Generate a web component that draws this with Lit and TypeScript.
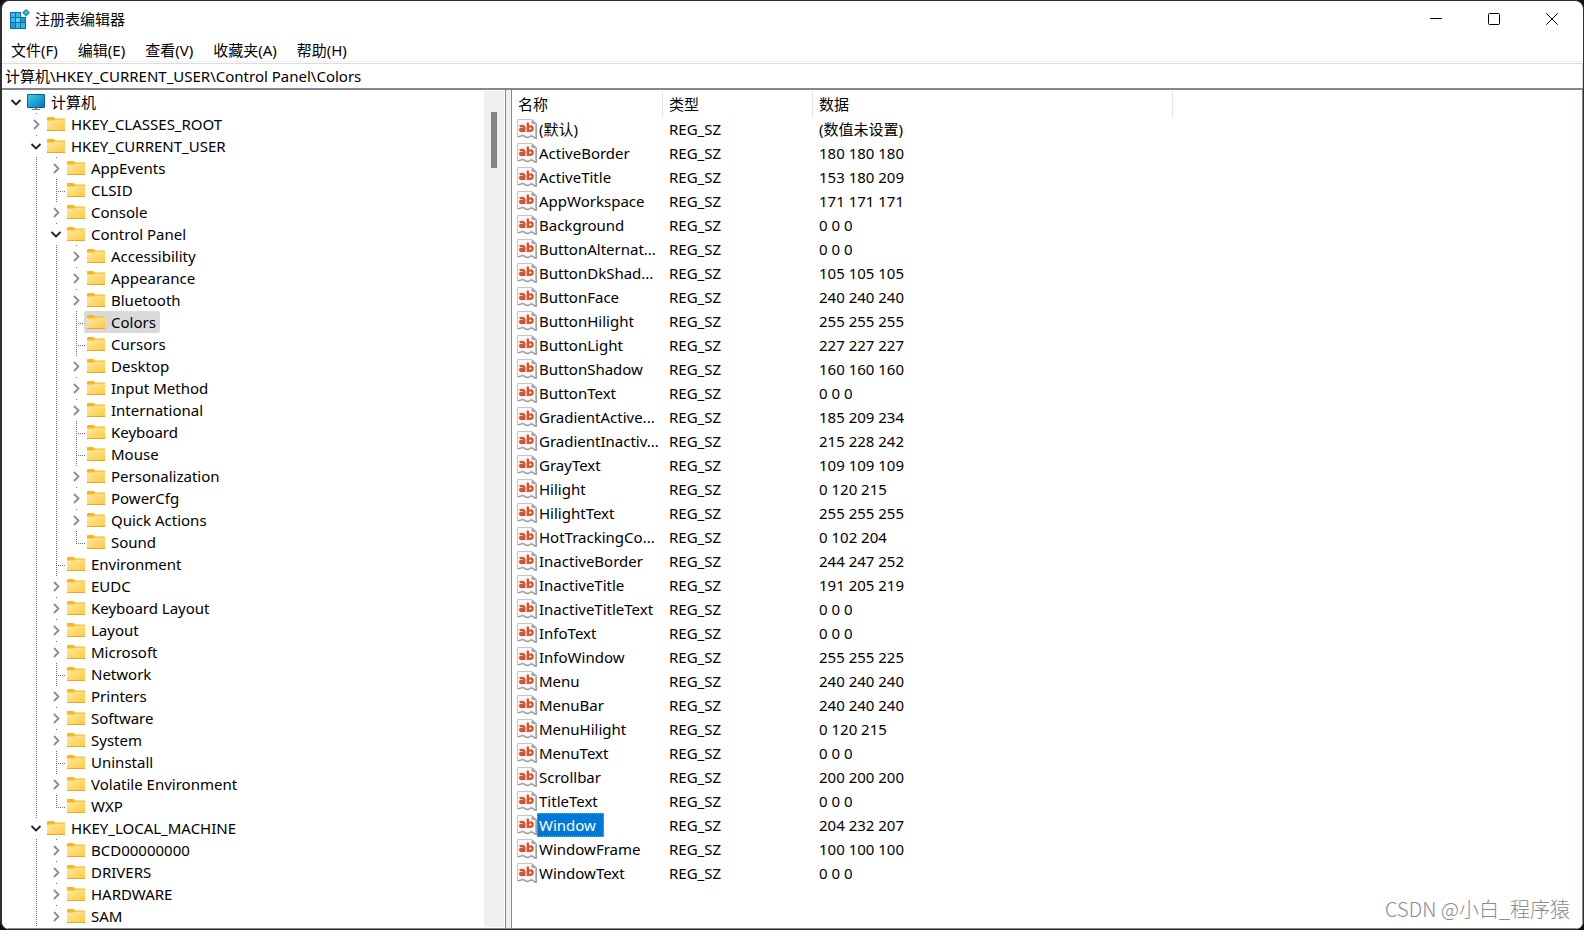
import { LitElement, html, css, svg, nothing } from "lit";
import { customElement, state } from "lit/decorators.js";
import { classMap } from "lit/directives/class-map.js";

type State = "open" | "closed" | "leaf";

interface Key {
  name: string;
  level: number;
  state: State;
}

const key = (level: number, state: State, ...names: string[]): Key[] =>
  names.map((name) => ({ name, level, state }));

const KEYS: Key[] = [
  ...key(0, "open", "计算机"),
  ...key(1, "closed", "HKEY_CLASSES_ROOT"),
  ...key(1, "open", "HKEY_CURRENT_USER"),
  ...key(2, "closed", "AppEvents"),
  ...key(2, "leaf", "CLSID"),
  ...key(2, "closed", "Console"),
  ...key(2, "open", "Control Panel"),
  ...key(3, "closed", "Accessibility", "Appearance", "Bluetooth"),
  ...key(3, "leaf", "Colors", "Cursors"),
  ...key(3, "closed", "Desktop", "Input Method", "International"),
  ...key(3, "leaf", "Keyboard", "Mouse"),
  ...key(3, "closed", "Personalization", "PowerCfg", "Quick Actions"),
  ...key(3, "leaf", "Sound"),
  ...key(2, "leaf", "Environment"),
  ...key(2, "closed", "EUDC", "Keyboard Layout", "Layout", "Microsoft"),
  ...key(2, "leaf", "Network"),
  ...key(2, "closed", "Printers", "Software", "System"),
  ...key(2, "leaf", "Uninstall"),
  ...key(2, "closed", "Volatile Environment"),
  ...key(2, "leaf", "WXP"),
  ...key(1, "open", "HKEY_LOCAL_MACHINE"),
  ...key(2, "closed", "BCD00000000", "DRIVERS", "HARDWARE", "SAM"),
];

const VALUES: [string, string][] = [
  ["(默认)", "(数值未设置)"],
  ["ActiveBorder", "180 180 180"],
  ["ActiveTitle", "153 180 209"],
  ["AppWorkspace", "171 171 171"],
  ["Background", "0 0 0"],
  ["ButtonAlternat...", "0 0 0"],
  ["ButtonDkShad...", "105 105 105"],
  ["ButtonFace", "240 240 240"],
  ["ButtonHilight", "255 255 255"],
  ["ButtonLight", "227 227 227"],
  ["ButtonShadow", "160 160 160"],
  ["ButtonText", "0 0 0"],
  ["GradientActive...", "185 209 234"],
  ["GradientInactiv...", "215 228 242"],
  ["GrayText", "109 109 109"],
  ["Hilight", "0 120 215"],
  ["HilightText", "255 255 255"],
  ["HotTrackingCo...", "0 102 204"],
  ["InactiveBorder", "244 247 252"],
  ["InactiveTitle", "191 205 219"],
  ["InactiveTitleText", "0 0 0"],
  ["InfoText", "0 0 0"],
  ["InfoWindow", "255 255 225"],
  ["Menu", "240 240 240"],
  ["MenuBar", "240 240 240"],
  ["MenuHilight", "0 120 215"],
  ["MenuText", "0 0 0"],
  ["Scrollbar", "200 200 200"],
  ["TitleText", "0 0 0"],
  ["Window", "204 232 207"],
  ["WindowFrame", "100 100 100"],
  ["WindowText", "0 0 0"],
];

const appIcon = html`<svg class="app-icon" viewBox="0 0 20 20" aria-hidden="true">
  <rect x="0" y="3" width="16" height="17" fill="#0b6fa8" />
  <g fill="#35b8ea">
    <rect x="1" y="4" width="4" height="4" /><rect x="6" y="4" width="4" height="4" />
    <rect x="1" y="9" width="4" height="4" /><rect x="6" y="9" width="4" height="4" fill="#62d0f5" />
    <rect x="11" y="9" width="4" height="4" fill="#1c9bd6" />
    <rect x="1" y="14" width="4" height="5" fill="#1c9bd6" /><rect x="6" y="14" width="4" height="5" />
    <rect x="11" y="14" width="4" height="5" />
  </g>
  <path d="M11 3h5v5h-5z" fill="#fff" />
  <path d="M16 0l4 3.800-4 3.800-4-3.800z" fill="#1f8fc4" />
  <path d="M16 2l2 1.800-2 1.800-2-1.800z" fill="#4fc0ea" />
</svg>`;

const computerIcon = html`<svg class="key-icon" viewBox="0 0 18 18" aria-hidden="true">
  <defs>
    <linearGradient id="screen" x1="0" y1="0" x2="1" y2="1">
      <stop offset="0" stop-color="#35d3e6" />
      <stop offset="1" stop-color="#0f6fc0" />
    </linearGradient>
  </defs>
  <rect x="0" y="1" width="18" height="14" rx="1" fill="#0c5f9c" />
  <rect x="1" y="2" width="16" height="12" fill="url(#screen)" />
  <path d="M8 15h2v1H8zM5 16h8v1H5z" fill="#6e7f8c" />
</svg>`;

const folderIcon = html`<svg class="key-icon" viewBox="0 0 18 18" aria-hidden="true">
  <defs>
    <linearGradient id="folder" x1="0" y1="0" x2="1" y2="1">
      <stop offset="0" stop-color="#ffe9a6" />
      <stop offset="1" stop-color="#ffcb3d" />
    </linearGradient>
  </defs>
  <path d="M0 3a1 1 0 0 1 1-1h5.500l1.500 1.500H17.500l.5.500V6H0z" fill="#f7b61c" />
  <path d="M0 5.500h6.500l1.500-1H18V15H0z" fill="url(#folder)" />
  <path d="M0 15h18v1H0z" fill="#e8a92a" />
</svg>`;

const stringIcon = html`<svg class="value-icon" viewBox="0 0 20 20" aria-hidden="true">
  <path
    d="M.5.5h14.500l4 4v15c-2-.2-3-2.500-4.500-2.500-2 0-2.500 2-4.500 1.500-2-.4-2.500-2-4.500-1.800-2 .2-2.500 1.300-5 .8z"
    fill="#f7f8f9"
    stroke="#c3c6c9"
  />
  <path d="M19.200 4.500v15c-2-.2-3-2.500-4.700-2.500-2 0-2.500 2-4.500 1.500-2-.4-2.500-2-4.500-1.800-2 .2-2.500 1.300-5 .8" fill="none" stroke="#94989c" stroke-width="1.300" />
  <path d="M15 .8v3.700h4z" fill="#a9adb1" stroke="#8d9195" stroke-width=".6" />
  <g fill="none" stroke="#d9532c" stroke-width="2.300">
    <path d="M2.600 7.300c2-.8 4.700-.8 4.700 1.300V13" />
    <path d="M7.200 9.700H5.200c-2.700 0-2.700 2.300-.5 2.300 1.400 0 2.300-.6 2.500-1.200" />
    <path d="M10.800 3.500V13" />
    <ellipse cx="13.200" cy="9.600" rx="2.400" ry="2.300" />
  </g>
</svg>`;

const twisty = (open: boolean) => svg`<svg class="twisty" viewBox="0 0 12 12" aria-hidden="true">
  ${
    open
      ? svg`<path d="M1.500 4l4.500 4.500L10.500 4" fill="none" stroke="#222" stroke-width="1.800" />`
      : svg`<path d="M4 2L8.500 6.500L4 11" fill="none" stroke="#8c8c8c" stroke-width="1.800" />`
  }
</svg>`;

@customElement("registry-tree")
export class RegistryTree extends LitElement {
  @state() private selected = "Colors";

  static styles = css`
    :host {
      display: flex;
      min-width: 0;
      background: #fff;
      border-right: 1px solid #828790;
    }
    .keys {
      flex: 1;
      min-width: 0;
      overflow: hidden;
      padding: 1px 0 0 4px;
    }
    .row {
      display: flex;
      height: 22px;
    }
    .guide {
      flex: none;
      width: 20px;
      display: flex;
      align-items: center;
      justify-content: center;
      background-repeat: no-repeat;
      --dot-v: repeating-linear-gradient(to bottom, #6e6e6e 0 1px, transparent 1px 2px);
      --dot-h: repeating-linear-gradient(to right, #6e6e6e 0 1px, transparent 1px 2px);
    }
    .line {
      background-image: var(--dot-v);
      background-position: 10px 0;
      background-size: 1px 22px;
    }
    .dot {
      background-image: var(--dot-v);
      background-position: 10px 0;
      background-size: 1px 1px;
    }
    .branch {
      background-image: var(--dot-v), var(--dot-h);
      background-position: 10px 0, 10px 12px;
      background-size: 1px 22px, 10px 1px;
    }
    .last {
      background-size: 1px 12px, 10px 1px;
    }
    .twisty {
      width: 12px;
      height: 12px;
    }
    .toggle {
      display: flex;
      padding: 0;
      border: 0;
      background: none;
    }
    .label {
      display: flex;
      align-items: center;
      gap: 4px;
      margin-left: -2px;
      padding: 0 4px 0 3px;
      border: 0;
      border-radius: 2px;
      background: none;
      color: #000;
      font: inherit;
      line-height: 22px;
      white-space: nowrap;
    }
    .text {
      padding-left: 2px;
    }
    .selected {
      background: #d9d9d9;
    }
    .key-icon {
      width: 18px;
      height: 18px;
    }
    .scrollbar {
      flex: none;
      width: 20px;
      margin: 1px 1px 1px 0;
      padding-top: 21px;
      background: #f0f0f0;
    }
    .thumb {
      width: 6px;
      height: 56px;
      margin: 0 auto;
      background: #858585;
    }
  `;

  private isLast(index: number) {
    const { level } = KEYS[index];
    const next = KEYS.slice(index + 1).find((k) => k.level <= level);
    return next !== undefined && next.level < level;
  }

  private row(item: Key, index: number) {
    const root = item.level === 0;
    const leaf = item.state === "leaf";
    const ancestors = Array.from({ length: item.level }, (_, i) => i);
    return html`<div
      class="row"
      role="treeitem"
      aria-level=${item.level + 1}
      aria-selected=${item.name === this.selected}
      aria-expanded=${leaf ? nothing : item.state === "open"}
    >
      ${ancestors.map((i) => html`<span class=${classMap({ guide: true, line: i > 0 })}></span>`)}
      <span
        class=${classMap({
          guide: true,
          dot: !leaf && !root,
          branch: leaf,
          last: leaf && this.isLast(index),
        })}
      >
        ${leaf
          ? nothing
          : html`<button class="toggle" aria-label=${item.name}>${twisty(item.state === "open")}</button>`}
      </span>
      <button
        class=${classMap({ label: true, selected: item.name === this.selected })}
        @click=${() => (this.selected = item.name)}
      >
        ${root ? computerIcon : folderIcon}<span class="text">${item.name}</span>
      </button>
    </div>`;
  }

  render() {
    return html`
      <div class="keys" role="tree">${KEYS.map((k, i) => this.row(k, i))}</div>
      <div class="scrollbar"><div class="thumb"></div></div>
    `;
  }
}

@customElement("registry-values")
export class RegistryValues extends LitElement {
  @state() private selected = "Window";

  static styles = css`
    :host {
      display: block;
      min-width: 0;
      padding: 1px 0 0 5px;
      background: #fff;
      border-left: 1px solid #828790;
      overflow: hidden;
    }
    table {
      width: 100%;
      table-layout: fixed;
      border-collapse: collapse;
    }
    .name {
      width: 146px;
    }
    .type {
      width: 150px;
    }
    .data {
      width: 360px;
    }
    th {
      height: 26px;
      box-sizing: border-box;
      padding: 0 0 0 6px;
      text-align: left;
      font-weight: 400;
      line-height: 26px;
      box-shadow: inset -1px 0 #e5e5e5;
    }
    th:first-child {
      padding-left: 1px;
    }
    th:last-child {
      box-shadow: none;
    }
    td {
      height: 24px;
      padding: 0 0 0 6px;
      line-height: 24px;
      white-space: nowrap;
    }
    td:first-child {
      padding: 0;
    }
    .cell {
      display: flex;
      align-items: center;
    }
    .value-icon {
      flex: none;
      width: 20px;
      height: 20px;
    }
    .value {
      box-sizing: border-box;
      height: 24px;
      padding: 0 1px;
      border: 1px solid transparent;
      background: none;
      color: #000;
      font: inherit;
      line-height: 22px;
      white-space: nowrap;
    }
    .selected {
      padding-right: 7px;
      border: 1px dotted #ff8728;
      background: #0078d7;
      color: #fff;
    }
  `;

  render() {
    return html`<table>
      <colgroup>
        <col class="name" />
        <col class="type" />
        <col class="data" />
        <col />
      </colgroup>
      <thead>
        <tr>
          <th scope="col">名称</th>
          <th scope="col">类型</th>
          <th scope="col">数据</th>
          <th></th>
        </tr>
      </thead>
      <tbody>
        ${VALUES.map(
          ([name, data]) => html`<tr>
            <td>
              <div class="cell">
                ${stringIcon}<button
                  class=${classMap({ value: true, selected: name === this.selected })}
                  @click=${() => (this.selected = name)}
                >${name}</button>
              </div>
            </td>
            <td>REG_SZ</td>
            <td>${data}</td>
            <td></td>
          </tr>`
        )}
      </tbody>
    </table>`;
  }
}

@customElement("app-root")
export class AppRoot extends LitElement {
  static styles = css`
    :host {
      display: flex;
      height: 100vh;
      box-sizing: border-box;
      background: #111;
      color: #000;
      font: 15px "Noto Sans", "Noto Sans CJK SC", sans-serif;
    }
    .window {
      position: relative;
      flex: 1;
      min-width: 0;
      display: flex;
      flex-direction: column;
      box-sizing: border-box;
      border: solid #2e2e33;
      border-width: 1px 1px 1px 2px;
      border-radius: 9px;
      background: #fff;
      overflow: hidden;
    }
    .titlebar {
      display: flex;
      align-items: center;
      height: 36px;
      padding: 0 2px 0 8px;
    }
    .app-icon {
      width: 20px;
      height: 20px;
      margin-right: 5px;
    }
    h1 {
      flex: 1;
      margin: 0;
      font-size: 15px;
      font-weight: 400;
      line-height: 36px;
    }
    .control {
      display: flex;
      align-items: center;
      justify-content: center;
      width: 58px;
      height: 36px;
      padding: 0;
      border: 0;
      background: none;
    }
    .control svg {
      width: 12px;
      height: 12px;
      fill: none;
      stroke: #000;
    }
    .menubar {
      display: flex;
      height: 24px;
      gap: 20px;
      padding: 0 9px;
      border-bottom: 1px solid #f0f0f0;
    }
    .menu {
      padding: 2px 0 0;
      border: 0;
      background: none;
      color: #000;
      font: inherit;
      line-height: 22px;
    }
    .address {
      box-sizing: border-box;
      height: 25px;
      margin-top: 1px;
      padding: 0 3px 1px;
      border: 1px solid #dcdcdc;
      border-width: 1px 1px 0 0;
      outline: 0;
      color: #000;
      font: inherit;
    }
    .panes {
      flex: 1;
      min-height: 0;
      display: grid;
      grid-template-columns: 504px minmax(0, 1fr);
      column-gap: 5px;
      background: #f0f0f0;
      border: solid #828790;
      border-width: 2px 1px 1px 0;
    }
    .watermark {
      position: absolute;
      right: 13px;
      bottom: 6px;
      color: #8c8c8c;
      font-family: "Noto Sans CJK SC", sans-serif;
      font-size: 20px;
      font-weight: 300;
      line-height: 28px;
    }
  `;

  render() {
    const menus = ["文件(F)", "编辑(E)", "查看(V)", "收藏夹(A)", "帮助(H)"];
    return html`<main class="window">
      <header class="titlebar">
        ${appIcon}
        <h1>注册表编辑器</h1>
        <button class="control" aria-label="最小化">
          <svg viewBox="0 0 12 12"><path d="M0 5.500h12" /></svg>
        </button>
        <button class="control" aria-label="最大化">
          <svg viewBox="0 0 12 12"><rect x=".5" y=".5" width="11" height="11" rx="1" /></svg>
        </button>
        <button class="control" aria-label="关闭">
          <svg viewBox="0 0 12 12"><path d="M.3.3l11.400 11.400M11.700.3L.3 11.700" /></svg>
        </button>
      </header>
      <nav class="menubar">
        ${menus.map((label) => html`<button class="menu">${label}</button>`)}
      </nav>
      <input class="address" aria-label="地址" value="计算机\\HKEY_CURRENT_USER\\Control Panel\\Colors" />
      <div class="panes">
        <registry-tree></registry-tree>
        <registry-values></registry-values>
      </div>
      <div class="watermark">CSDN @小白_程序猿</div>
    </main>`;
  }
}
